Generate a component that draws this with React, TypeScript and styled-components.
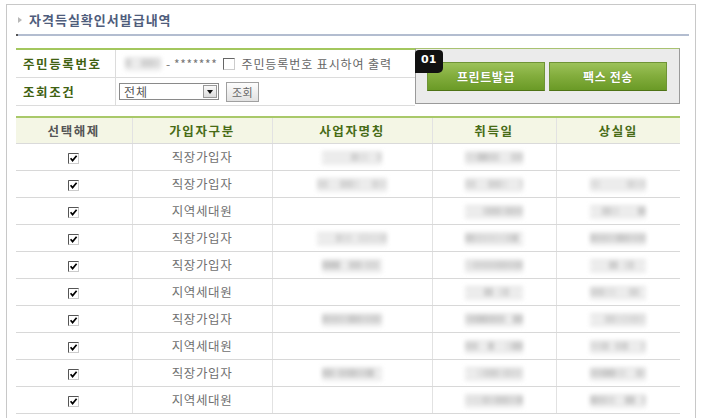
import styled, { createGlobalStyle } from 'styled-components';

const GlobalStyle = createGlobalStyle`
  html, body {
    margin: 0;
    padding: 0;
    background: #fff;
  }
  body {
    font-family: "Noto Sans CJK KR", "Noto Sans", sans-serif;
    font-size: 12px;
    color: #666;
  }
`;

const Page = styled.div`
  padding: 4px 0 0 6px;
  height: 414px;
  overflow: hidden;
`;

const Panel = styled.div`
  width: 690px;
  border: 1px solid #c8c8c8;
  border-bottom: none;
  padding: 0 6px 0 9px;
  box-sizing: border-box;
  height: 420px;
`;

const TitleBar = styled.div`
  display: flex;
  align-items: center;
  gap: 7px;
  height: 29px;
  padding: 0 0 0 2px;
  border-bottom: 2px solid #b3bdd0;
  position: relative;

  &::before {
    content: '';
    position: absolute;
    left: 0;
    bottom: -2px;
    width: 2px;
    height: 2px;
    background: #555;
  }
`;

const Arrow = styled.span`
  width: 0;
  height: 0;
  border-top: 3px solid transparent;
  border-bottom: 3px solid transparent;
  border-left: 4px solid #b8b8b8;
`;

const Title = styled.h1`
  margin: 0;
  font-size: 13px;
  font-weight: 700;
  color: #4f5d7c;
  letter-spacing: 1px;
`;

const SearchArea = styled.div`
  display: flex;
  margin-top: 12px;
  width: 664px;
`;

const FormTable = styled.div`
  width: 399px;
  border-top: 2px solid #a3c75e;
`;

const FormRow = styled.div`
  display: flex;
  height: 27px;
  border-bottom: 1px solid #dcdcdc;
`;

const FormLabel = styled.div`
  width: 92px;
  padding-left: 7px;
  border-right: 1px solid #dcdcdc;
  display: flex;
  align-items: center;
  font-weight: 700;
  font-size: 12.5px;
  letter-spacing: 1.6px;
  color: #3f6212;
`;

const FormValue = styled.div`
  flex: 1;
  display: flex;
  align-items: center;
  padding-left: 9px;
  gap: 4px;
  color: #666;
  letter-spacing: 0.9px;
`;

const Masked = styled.span`
  color: #777;
  letter-spacing: 0.6px;
  margin-left: 1px;
`;

const Box = styled.span`
  display: inline-flex;
  width: 10px;
  height: 10px;
  border: 1px solid #666;
  border-right-color: #ccc;
  border-bottom-color: #ccc;
  background: #fff;
  margin: 0 2px;
`;

const Select = styled.div`
  width: 100px;
  height: 17px;
  border: 1px solid #8a8a8a;
  display: flex;
  align-items: center;
  justify-content: space-between;
  padding-left: 4px;
  box-sizing: border-box;
  color: #555;
  font-size: 12px;
  background: #fff;
  margin-left: -6px;
`;

const SelectArrow = styled.span`
  width: 14px;
  height: 13px;
  margin-right: 1px;
  border: 1px solid #999;
  box-sizing: border-box;
  background: linear-gradient(#fafafa, #dcdcdc);
  display: flex;
  align-items: center;
  justify-content: center;

  &::after {
    content: '';
    border-left: 3px solid transparent;
    border-right: 3px solid transparent;
    border-top: 4px solid #111;
  }
`;

const SmallButton = styled.span`
  height: 18px;
  padding: 0 5px;
  display: inline-flex;
  align-items: center;
  border: 1px solid #a0a0a0;
  background: linear-gradient(#fdfdfd, #e2e2e2);
  color: #666;
  font-size: 11px;
  letter-spacing: 0.5px;
  margin-left: 3px;
`;

const ButtonPanel = styled.div`
  position: relative;
  flex: 1;
  height: 56px;
  box-sizing: border-box;
  border: 1px solid #9a9a9a;
  border-top: 1px solid #a9c271;
  background: #ebebeb;
  display: flex;
  align-items: flex-start;
  gap: 4px;
  padding: 13px 0 0 11px;
`;

const Badge = styled.span`
  position: absolute;
  left: -1px;
  top: 1px;
  width: 28px;
  height: 23px;
  background: #111;
  color: #fff;
  font-family: "DejaVu Sans", sans-serif;
  font-weight: 700;
  font-size: 11px;
  padding: 3px 0 0 6px;
  box-sizing: border-box;
  border-radius: 4px 4px 5px 0;
`;

const GreenButton = styled.button`
  width: 118px;
  height: 29px;
  border: 1px solid #6f9436;
  border-bottom-color: #4e7216;
  background: linear-gradient(#9cc25a 0%, #84ae3e 45%, #6a9a26 100%);
  color: #fff;
  font-family: "Noto Sans CJK KR", sans-serif;
  font-weight: 700;
  font-size: 12px;
  letter-spacing: 0.6px;
  padding: 0;
  text-shadow: 0 0 1px rgba(60, 90, 20, 0.6);
`;

const Grid = styled.table`
  margin-top: 10px;
  width: 664px;
  border-collapse: collapse;
  table-layout: fixed;
  border-top: 2px solid #a9c96a;
`;

const Th = styled.th<{ $plain?: boolean }>`
  height: 25px;
  padding: 0;
  line-height: 16px;
  background: #f4f6e5;
  border-bottom: 1px solid #dadada;
  border-left: 1px solid #e2e2e2;
  font-size: 12.5px;
  font-weight: 700;
  letter-spacing: 1.6px;
  color: ${({ $plain }) => ($plain ? '#555' : '#476b16')};

  &:first-child {
    border-left: none;
  }
`;

const Td = styled.td`
  height: 26px;
  padding: 0;
  line-height: 16px;
  text-align: center;
  border-bottom: 1px solid #d8d8d8;
  border-left: 1px solid #e2e2e2;
  color: #707070;
  font-size: 12.5px;
  letter-spacing: 0.6px;

  &:first-child {
    border-left: none;
  }
`;

const Blur = styled.span<{ $w: number }>`
  display: inline-block;
  vertical-align: middle;
  width: ${({ $w }) => $w}px;
  height: 14px;
  filter: blur(2px);
  opacity: 0.6;
  background-repeat: no-repeat;
`;

const CheckMark = () => (
  <svg width="11" height="11" viewBox="0 0 11 11" style={{ verticalAlign: 'middle' }}>
    <rect x="0.5" y="0.5" width="10" height="10" fill="#fff" stroke="#ccc" />
    <path d="M0.5 10.5V0.5H10.5" fill="none" stroke="#555" />
    <path d="M2.6 5.2L4.6 7.6L8.6 2.8" fill="none" stroke="#000" strokeWidth="1.7" />
  </svg>
);

// pseudo-random gray blocks standing in for the blurred values
const blurBg = (seed: number, w: number) => {
  let s = seed * 9301 + 49297;
  const rnd = () => {
    s = (s * 9301 + 49297) % 233280;
    return s / 233280;
  };
  const stops: string[] = [];
  let x = 0;
  while (x < w) {
    const seg = 5 + Math.floor(rnd() * 9);
    const g = rnd() < 0.3 ? 225 : 165 + Math.floor(rnd() * 45);
    stops.push(`rgb(${g},${g},${g}) ${x}px ${Math.min(x + seg, w)}px`);
    x += seg;
  }
  return `linear-gradient(90deg, ${stops.join(', ')}), linear-gradient(#d4d4d4, #e2e2e2)`;
};

const Blurred = ({ seed, w }: { seed: number; w: number }) => (
  <Blur
    $w={w}
    style={{
      backgroundImage: blurBg(seed, w),
      backgroundSize: `${w}px 8px, ${w}px 14px`,
      backgroundPosition: '0 2px, 0 0',
    }}
  />
);

type Row = { kind: string; name: boolean; lost: boolean };

const rows: Row[] = [
  { kind: '직장가입자', name: true, lost: false },
  { kind: '직장가입자', name: true, lost: true },
  { kind: '지역세대원', name: false, lost: true },
  { kind: '직장가입자', name: true, lost: true },
  { kind: '직장가입자', name: true, lost: true },
  { kind: '지역세대원', name: false, lost: true },
  { kind: '직장가입자', name: true, lost: true },
  { kind: '지역세대원', name: false, lost: true },
  { kind: '직장가입자', name: true, lost: true },
  { kind: '지역세대원', name: false, lost: true },
];

export default function App() {
  return (
    <>
      <GlobalStyle />
      <Page>
        <Panel>
          <TitleBar>
            <Arrow />
            <Title>자격득실확인서발급내역</Title>
          </TitleBar>

          <SearchArea>
            <FormTable>
              <FormRow>
                <FormLabel>주민등록번호</FormLabel>
                <FormValue>
                  <Blurred seed={3} w={36} />
                  <Masked>- *******</Masked>
                  <Box />
                  <span>주민등록번호 표시하여 출력</span>
                </FormValue>
              </FormRow>
              <FormRow>
                <FormLabel>조회조건</FormLabel>
                <FormValue>
                  <Select>
                    전체
                    <SelectArrow />
                  </Select>
                  <SmallButton>조회</SmallButton>
                </FormValue>
              </FormRow>
            </FormTable>

            <ButtonPanel>
              <Badge>01</Badge>
              <GreenButton>프린트발급</GreenButton>
              <GreenButton>팩스 전송</GreenButton>
            </ButtonPanel>
          </SearchArea>

          <Grid>
            <colgroup>
              <col style={{ width: 116 }} />
              <col style={{ width: 140 }} />
              <col style={{ width: 160 }} />
              <col style={{ width: 124 }} />
              <col style={{ width: 124 }} />
            </colgroup>
            <thead>
              <tr>
                <Th $plain>선택해제</Th>
                <Th>가입자구분</Th>
                <Th>사업자명칭</Th>
                <Th>취득일</Th>
                <Th>상실일</Th>
              </tr>
            </thead>
            <tbody>
              {rows.map((r, i) => (
                <tr key={i}>
                  <Td>
                    <CheckMark />
                  </Td>
                  <Td>{r.kind}</Td>
                  <Td>{r.name && <Blurred seed={i * 7 + 11} w={i % 2 ? 70 : 60} />}</Td>
                  <Td>
                    <Blurred seed={i * 13 + 5} w={58} />
                  </Td>
                  <Td>{r.lost && <Blurred seed={i * 17 + 2} w={56} />}</Td>
                </tr>
              ))}
            </tbody>
          </Grid>
        </Panel>
      </Page>
    </>
  );
}
